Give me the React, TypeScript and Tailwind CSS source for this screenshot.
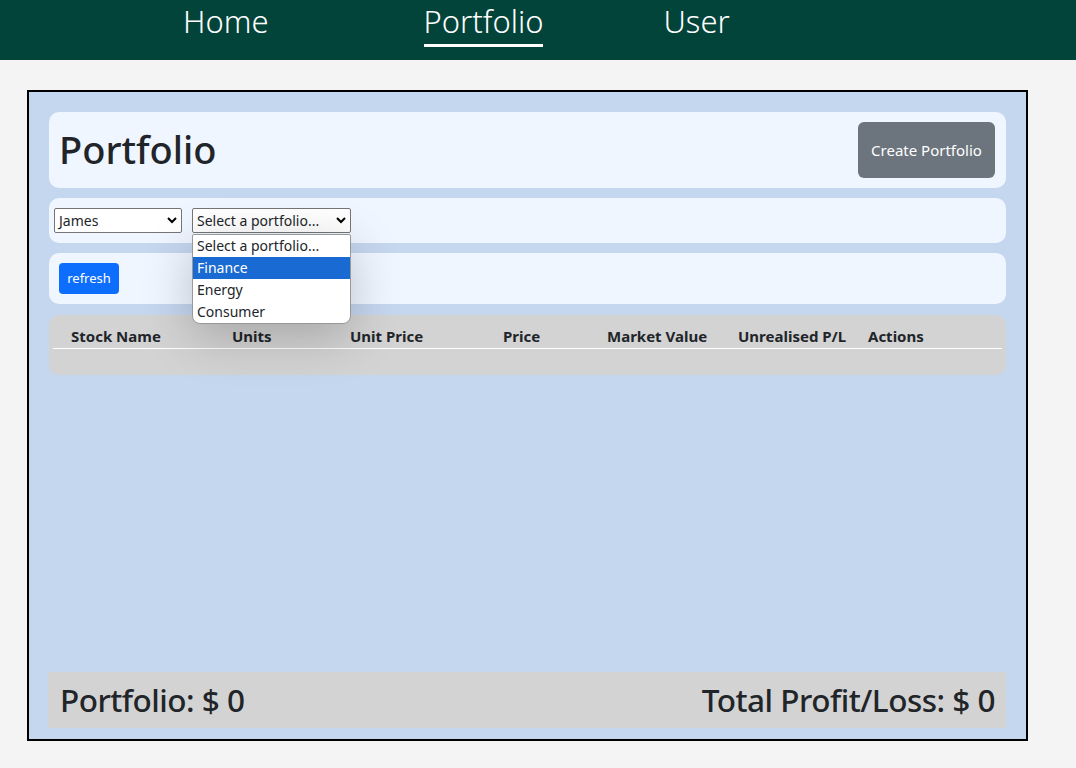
import React from "react";

export default function App() {
  const cols = [
    { label: "Stock Name", x: "pl-[18px] w-[179px]" },
    { label: "Units", x: "w-[118px]" },
    { label: "Unit Price", x: "w-[153px]" },
    { label: "Price", x: "w-[104px]" },
    { label: "Market Value", x: "w-[131px]" },
    { label: "Unrealised P/L", x: "w-[130px]" },
    { label: "Actions", x: "" },
  ];
  return (
    <div className="min-h-[768px] bg-[#f4f4f4] text-[#212529]" style={{ fontFamily: '"Noto Sans", sans-serif' }}>
      <nav className="h-[60px] bg-[#03443a] flex items-start text-white text-[31px] font-light leading-[42px]">
        <div className="ml-[183px]">Home</div>
        <div className="ml-[155px] flex flex-col">
          <span>Portfolio</span>
          <span className="h-[3px] bg-white mt-[2px]" />
        </div>
        <div className="ml-[120px]">User</div>
      </nav>
      <div className="pt-[30px] pl-[27px]">
        <div className="w-[1001px] h-[651px] border-2 border-black bg-[#c5d6ef] px-[20px] pt-[20px] pb-[10px] flex flex-col">
          <div className="h-[76px] bg-[#eff6ff] rounded-[10px] flex items-center justify-between pl-[10px] pr-[11px]">
            <h1 className="text-[38px] font-medium leading-none mb-[3px]">Portfolio</h1>
            <button className="w-[137px] h-[56px] bg-[#6c757d] text-white text-[15px] rounded-[6px]">Create Portfolio</button>
          </div>
          <div className="relative mt-[10px] h-[45px] bg-[#eff6ff] rounded-[10px] flex items-start pt-[10px] pl-[5px] gap-[10px] text-[14px]">
            <div className="w-[128px] h-[25px] border border-[#767676] rounded-[2px] bg-white flex items-center justify-between px-[4px]">
              <span>James</span>
              <Chevron />
            </div>
            <div className="relative w-[159px] h-[25px] border border-[#767676] rounded-[2px] bg-white flex items-center justify-between px-[4px]">
              <span>Select a portfolio...</span>
              <Chevron />
              <div className="absolute left-[-1px] top-[25px] w-[159px] bg-white border border-[#999] rounded-b-[8px] rounded-t-[2px] shadow-[0_12px_50px_rgba(0,0,0,0.22)] z-10 overflow-hidden leading-[22px]">
                <div className="px-[4px]">Select a portfolio...</div>
                <div className="px-[4px] bg-[#1a6ad4] text-white">Finance</div>
                <div className="px-[4px]">Energy</div>
                <div className="px-[4px]">Consumer</div>
              </div>
            </div>
          </div>
          <div className="mt-[10px] h-[51px] bg-[#eff6ff] rounded-[10px] flex items-center pl-[10px]">
            <button className="w-[60px] h-[31px] bg-[#0d6efd] text-white text-[13px] rounded-[4px]">refresh</button>
          </div>
          <div className="mt-[11px] h-[60px] bg-[#d3d3d3] rounded-[10px] px-[4px] pt-[11px]">
            <div className="flex text-[15px] font-bold border-b border-white pb-[2px] leading-[20px]">
              {cols.map((c) => (
                <div key={c.label} className={c.x}>{c.label}</div>
              ))}
            </div>
          </div>
          <div className="flex-1" />
          <div className="h-[56px] -ml-[1px] bg-[#d3d3d3] flex items-center justify-between pl-[12px] pr-[11px] text-[31.5px] font-medium tracking-[-0.5px] mb-[1px]">
            <span>Portfolio: $ 0</span>
            <span>Total Profit/Loss: $ 0</span>
          </div>
        </div>
      </div>
    </div>
  );
}

function Chevron() {
  return (
    <svg width="10" height="7" viewBox="0 0 10 7" fill="none" stroke="#000" strokeWidth="2">
      <path d="M1 1l4 4 4-4" />
    </svg>
  );
}
